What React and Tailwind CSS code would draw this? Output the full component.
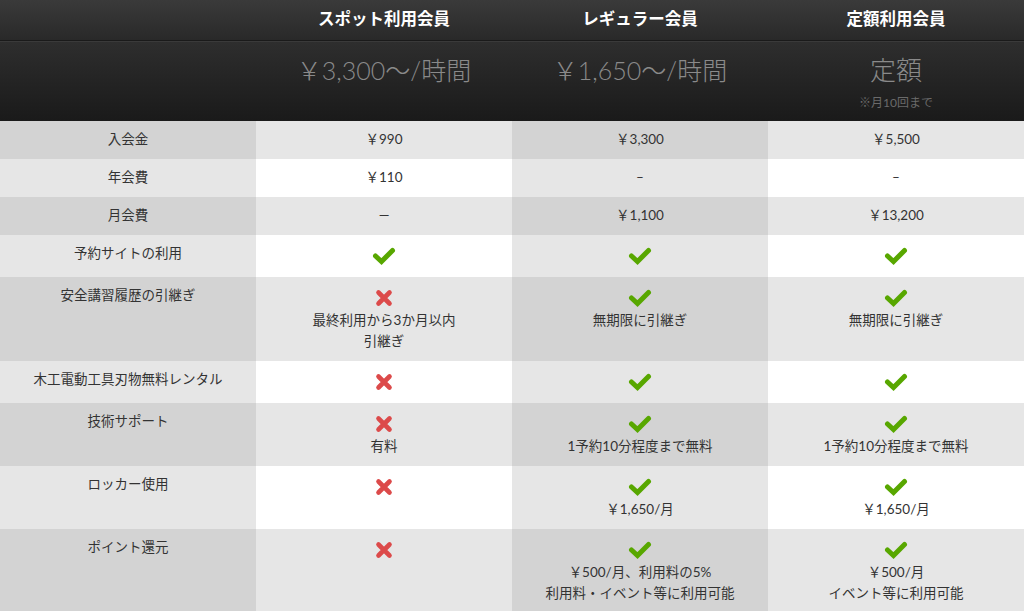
import React from "react";

const font = { fontFamily: '"Lato", "Noto Sans CJK JP", sans-serif' };

function Check() {
  return (
    <div className="h-[25px] flex items-center justify-center">
      <svg width="24" height="18" viewBox="0 0 24 18">
        <polyline points="3.5,9 9.5,14.5 20.5,3.5" fill="none" stroke="#58a700" strokeWidth="5" strokeLinecap="round" strokeLinejoin="miter" />
      </svg>
    </div>
  );
}
function Cross() {
  return (
    <div className="h-[25px] flex items-center justify-center">
      <svg width="18" height="18" viewBox="0 0 18 18">
        <path d="M3.5 3.5 L14.5 14.5 M14.5 3.5 L3.5 14.5" fill="none" stroke="#dc4a4a" strokeWidth="4.6" strokeLinecap="round" />
      </svg>
    </div>
  );
}

const rows = [
  { label: "入会金", cells: [{ t: ["￥990"] }, { t: ["￥3,300"] }, { t: ["￥5,500"] }] },
  { label: "年会費", cells: [{ t: ["￥110"] }, { t: ["–"] }, { t: ["–"] }] },
  { label: "月会費", cells: [{ t: ["—"] }, { t: ["￥1,100"] }, { t: ["￥13,200"] }] },
  { label: "予約サイトの利用", cells: [{ i: "c" }, { i: "c" }, { i: "c" }] },
  {
    label: "安全講習履歴の引継ぎ",
    cells: [
      { i: "x", t: ["最終利用から3か月以内", "引継ぎ"] },
      { i: "c", t: ["無期限に引継ぎ"] },
      { i: "c", t: ["無期限に引継ぎ"] },
    ],
  },
  { label: "木工電動工具刃物無料レンタル", cells: [{ i: "x" }, { i: "c" }, { i: "c" }] },
  {
    label: "技術サポート",
    cells: [
      { i: "x", t: ["有料"] },
      { i: "c", t: ["1予約10分程度まで無料"] },
      { i: "c", t: ["1予約10分程度まで無料"] },
    ],
  },
  {
    label: "ロッカー使用",
    cells: [{ i: "x" }, { i: "c", t: ["￥1,650/月"] }, { i: "c", t: ["￥1,650/月"] }],
  },
  {
    label: "ポイント還元",
    cells: [
      { i: "x" },
      { i: "c", t: ["￥500/月、利用料の5%", "利用料・イベント等に利用可能"] },
      { i: "c", t: ["￥500/月", "イベント等に利用可能"] },
    ],
  },
];

const oddBg = ["bg-[#d3d3d3]", "bg-[#e6e6e6]", "bg-[#d3d3d3]", "bg-[#e6e6e6]"];
const evenBg = ["bg-[#e6e6e6]", "bg-[#ffffff]", "bg-[#e6e6e6]", "bg-[#ffffff]"];

export default function App() {
  return (
    <div className="w-[1024px] h-[611px] overflow-hidden bg-white text-[#333]" style={font}>
      <div className="grid grid-cols-4 h-[41px] bg-gradient-to-b from-[#3a3a3a] to-[#292929] border-b border-[#1a1a1a]">
        <div />
        <div className="flex items-center justify-center text-white font-bold text-[16.5px] pb-[2px]">スポット利用会員</div>
        <div className="flex items-center justify-center text-white font-bold text-[16.5px] pb-[2px]">レギュラー会員</div>
        <div className="flex items-center justify-center text-white font-bold text-[16.5px] pb-[2px]">定額利用会員</div>
      </div>
      <div className="grid grid-cols-4 h-[80px] bg-gradient-to-b from-[#2e2e2e] to-[#1a1a1a] border-t border-[#3a3a3a]">
        <div />
        <div className="flex justify-center pt-[12px] text-[#8a8a8a] text-[25px] leading-[32px] font-light">￥3,300～/時間</div>
        <div className="flex justify-center pt-[12px] text-[#8a8a8a] text-[25px] leading-[32px] font-light">￥1,650～/時間</div>
        <div className="flex flex-col items-center pt-[12px] text-[#8a8a8a]">
          <div className="text-[26px] leading-[32px] font-light">定額</div>
          <div className="text-[12px] leading-[18px] mt-[8px] text-[#6a6a6a]">※月10回まで</div>
        </div>
      </div>
      {rows.map((r, ri) => {
        const bg = ri % 2 === 0 ? oddBg : evenBg;
        return (
          <div key={ri} className="grid grid-cols-4 text-[13.5px] leading-[21px]">
            <div className={`${bg[0]} text-center pt-[8px] pb-[9px]`}>{r.label}</div>
            {r.cells.map((c, ci) => (
              <div key={ci} className={`${bg[ci + 1]} flex flex-col items-center pt-[8px] pb-[9px]`}>
                {c.i === "c" && <Check />}
                {c.i === "x" && <Cross />}
                {c.t && c.t.map((line, li) => <div key={li}>{line}</div>)}
              </div>
            ))}
          </div>
        );
      })}
    </div>
  );
}
